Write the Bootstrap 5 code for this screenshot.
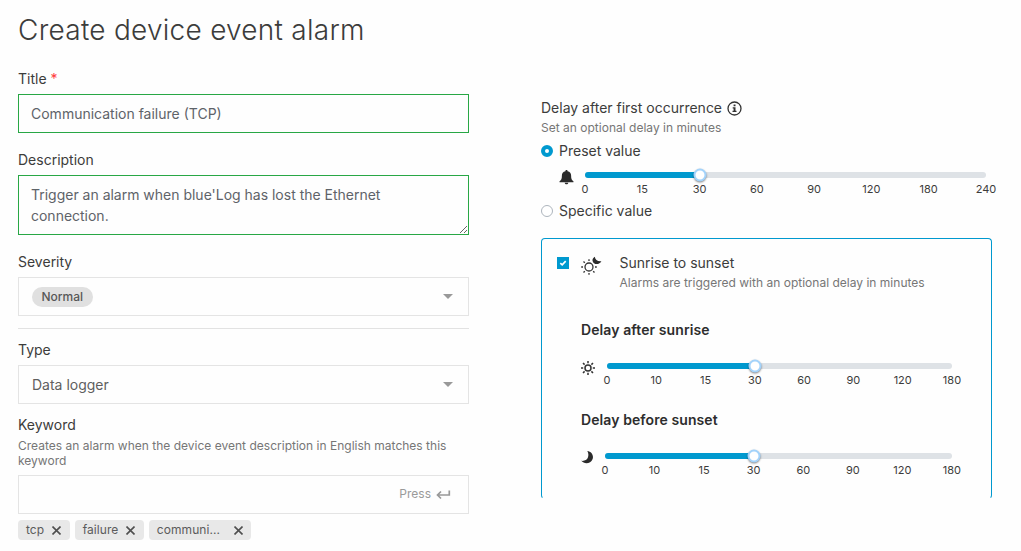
<!DOCTYPE html>
<html lang="en">
<head>
<meta charset="utf-8">
<meta name="viewport" content="width=device-width, initial-scale=1">
<title>Create device event alarm</title>
<link href="https://cdn.jsdelivr.net/npm/bootstrap@5.3.0/dist/css/bootstrap.min.css" rel="stylesheet">
<style>
  body { font-family: Inter, "Liberation Sans", sans-serif; font-size: 14px; line-height: 20px; color: #3c3c3b; background: #fefefe; overflow: hidden; }
  svg { display: block; flex: none; }
  .page { padding: 12px 29px 0 18px; }
  .page-title { font-size: 28px; line-height: 36px; font-weight: 300; letter-spacing: .26px; margin-bottom: 21px; }
  .form-cols { display: grid; grid-template-columns: 451px 451px; column-gap: 72px; }
  .form-label { display: block; margin: 0 0 5px; line-height: 20px; }
  .spaced-label { margin-top: 17px; }
  .keyword-label { margin: 11px 0 3px; }
  .required { color: #ff3b3b; }
  .form-control, .picker { height: 39px; border: 1px solid #e4e4e4; border-radius: 0; background: #fefefe; font-size: 14px; color: #5e6369; padding: 0 12px; }
  .form-control.valid { border-color: #28a745; }
  textarea.form-control { height: 60px; min-height: 60px; padding: 8px 12px; line-height: 21px; letter-spacing: -.01px; overflow: hidden; }
  .picker { padding: 0 15px 0 13px; color: #5f5f5f; }
  .severity { background: #e0e0e0; color: #575757; font-size: 12px; font-weight: 500; line-height: 20px; padding: 0 9.5px; border-radius: 10px; }
  .divider { height: 1px; background: #e2e2e2; margin: 12px 0 11px; }
  .hint { font-size: 12px; line-height: 15px; color: #767676; letter-spacing: .01px; }
  .hint-keyword { margin-bottom: 7px; }
  .hint-under { margin-top: 2px; }
  .press { color: #9a9a9a; font-size: 12px; padding: 0 17px 2px 0; }
  .chips { gap: 5px; margin-top: 6px; }
  .chip { height: 20px; background: #e8e8e8; border-radius: 4px; padding: 0 8.5px 0 8px; font-size: 12px; color: #5b5b5b; letter-spacing: .06px; gap: 8px; }
  .chip-cut { gap: 14px; }
  .right-col { padding-top: 29px; }
  .info-icon { margin-left: 5px; }
  .choice { gap: 6px; }
  .choice-preset { margin-top: 6px; }
  .choice-specific { margin-top: 5px; }
  .radio-dot { width: 12px; height: 12px; border-radius: 50%; border: 1px solid #adb5bd; background: #fff; }
  .radio-dot.on { border: 4px solid #0099cf; }
  .preset-row { padding: 11px 6px 0 17px; }
  .bell { margin: -2px 11px 0 1px; }
  .slider-track { height: 6px; border-radius: 3px; background: #dee2e6; position: relative; }
  .slider-fill { height: 6px; border-radius: 3px; background: #0099cf; }
  .slider-thumb { position: absolute; top: 50%; width: 13px; height: 13px; border-radius: 50%; background: #fff; border: 2px solid #a3d3fb; transform: translate(-50%, -50%); box-shadow: 0 1px 2px rgba(0,0,0,.45); }
  .ticks { font-size: 11px; line-height: 14px; margin-top: 4px; }
  .ticks span { width: 0; display: flex; justify-content: center; }
  .sun-card { height: 261px; margin-top: 17px; border: 1px solid #0099cf; border-bottom-color: transparent; border-radius: 4px; padding: 14px 39px 0 15px; }
  .check-box { width: 12px; height: 12px; margin-top: 4px; background: #0099cf; }
  .sun-moon { margin: 3px 17.500px 0 12px; }
  .sun-body { padding: 30px 0 0 24px; }
  .section-title { font-size: 14px; font-weight: 600; line-height: 20px; letter-spacing: .09px; color: #2d2d2d; margin: 0; }
  .sun-row { padding-top: 23px; margin-bottom: 23px; }
  .row-icon { margin: -2px 12px 0 0; }
</style>
</head>
<body>
<main class="page">
  <h1 class="page-title">Create device event alarm</h1>
  <div class="form-cols">
    <section>
      <label class="form-label">Title <span class="required">*</span></label>
      <input class="form-control valid" type="text" value="Communication failure (TCP)">
      <label class="form-label spaced-label">Description</label>
      <textarea class="form-control valid">Trigger an alarm when blue'Log has lost the Ethernet connection.</textarea>
      <label class="form-label spaced-label">Severity</label>
      <div class="picker d-flex align-items-center justify-content-between">
        <span class="severity">Normal</span>
        <svg width="10" height="5" viewBox="0 0 10 5"><path d="M0 0h10L5 5z" fill="#999"/></svg>
      </div>
      <div class="divider"></div>
      <label class="form-label">Type</label>
      <div class="picker d-flex align-items-center justify-content-between">
        <span>Data logger</span>
        <svg width="10" height="5" viewBox="0 0 10 5"><path d="M0 0h10L5 5z" fill="#999"/></svg>
      </div>
      <label class="form-label keyword-label">Keyword</label>
      <div class="hint hint-keyword">Creates an alarm when the device event description in English matches this keyword</div>
      <div class="picker press d-flex align-items-center justify-content-end">
        <span>Press</span>
        <svg class="ms-1" width="16" height="12" viewBox="0 0 16 12" fill="none" stroke="#999" stroke-width="1.700"><path d="M14.300 2.500V7H3M6 3.500L2.500 7 6 10.500"/></svg>
      </div>
      <div class="chips d-flex">
        <span class="chip d-flex align-items-center"><span>tcp</span><svg width="9" height="9" viewBox="0 0 9 9" stroke="#4f4f4f" stroke-width="1.600"><path d="M.5.5l8 8M8.500.5l-8 8"/></svg></span>
        <span class="chip d-flex align-items-center"><span>failure</span><svg width="9" height="9" viewBox="0 0 9 9" stroke="#4f4f4f" stroke-width="1.600"><path d="M.5.5l8 8M8.500.5l-8 8"/></svg></span>
        <span class="chip chip-cut d-flex align-items-center"><span>communi...</span><svg width="9" height="9" viewBox="0 0 9 9" stroke="#4f4f4f" stroke-width="1.600"><path d="M.5.5l8 8M8.500.5l-8 8"/></svg></span>
      </div>
    </section>

    <section class="right-col">
      <div class="d-flex align-items-center">
        <span>Delay after first occurrence</span>
        <svg class="info-icon" width="15" height="15" viewBox="0 0 15 15"><circle cx="7.500" cy="7.500" r="6.500" fill="none" stroke="#333" stroke-width="1.300"/><path d="M6.600 3.500h1.900v1.700H6.600zM5.700 6.300h2.800v3.500h1V11h-4V9.800h1.100V7.500h-.9z" fill="#333"/></svg>
      </div>
      <div class="hint hint-under">Set an optional delay in minutes</div>
      <div class="choice choice-preset d-flex align-items-center">
        <span class="radio-dot on"></span><span>Preset value</span>
      </div>
      <div class="preset-row d-flex">
        <svg class="bell" width="15" height="15" viewBox="0 0 15 15" fill="#2b2b2b"><path d="M7.500 0c.7 0 1.100.5 1.100 1.200 2.400.5 3.500 2 3.500 4.300 0 3.400.7 4.700 2.200 5.700.5.400.3 1-.3 1H1c-.6 0-.8-.6-.3-1C2.200 10.200 2.900 8.900 2.900 5.500c0-2.300 1.100-3.800 3.500-4.300C6.400.5 6.800 0 7.500 0zM5.700 12.700h3.600c-.2 1-.9 1.500-1.800 1.500s-1.600-.5-1.800-1.500z"/></svg>
        <div class="flex-grow-1">
          <div class="slider-track"><div class="slider-fill" style="width:28.571%"></div><i class="slider-thumb" style="left:28.571%"></i></div>
          <div class="ticks d-flex justify-content-between"><span>0</span><span>15</span><span>30</span><span>60</span><span>90</span><span>120</span><span>180</span><span>240</span></div>
        </div>
      </div>
      <div class="choice choice-specific d-flex align-items-center">
        <span class="radio-dot"></span><span>Specific value</span>
      </div>

      <div class="sun-card">
        <div class="d-flex">
          <span class="check-box"><svg width="12" height="12" viewBox="0 0 12 12" fill="none" stroke="#fff" stroke-width="1.700"><path d="M3.300 6.100l1.900 1.700 3.500-3.600"/></svg></span>
          <svg class="sun-moon" width="21" height="20" viewBox="0 0 21 20"><g fill="none" stroke="#333" stroke-width="1.300"><circle cx="8" cy="11" r="4"/><path d="M8 3.300v1.800M8 17v1.800M.2 11H2M14 11h1.800M2.500 5.500l1.300 1.300M12.200 15.200l1.300 1.300M2.500 16.500l1.300-1.300"/></g><path d="M13.800.800C14 3.700 16.500 5.600 20.400 5.200 19 7.800 15.500 9 13 7.200 10.800 5.400 11 2.300 13.800.800z" fill="#2b2b2b"/></svg>
          <div>
            <div>Sunrise to sunset</div>
            <div class="hint hint-under">Alarms are triggered with an optional delay in minutes</div>
          </div>
        </div>
        <div class="sun-body">
          <h2 class="section-title">Delay after sunrise</h2>
          <div class="sun-row d-flex">
            <svg class="row-icon" width="14" height="14" viewBox="0 0 14 14" fill="none" stroke="#333" stroke-width="1.500"><circle cx="7" cy="7" r="3"/><path d="M7 0v2.200M7 11.800V14M0 7h2.200M11.800 7H14M2 2l1.600 1.600M10.400 10.400L12 12M12 2l-1.600 1.600M3.600 10.400L2 12"/></svg>
            <div class="flex-grow-1">
              <div class="slider-track"><div class="slider-fill" style="width:42.857%"></div><i class="slider-thumb" style="left:42.857%"></i></div>
              <div class="ticks d-flex justify-content-between"><span>0</span><span>10</span><span>15</span><span>30</span><span>60</span><span>90</span><span>120</span><span>180</span></div>
            </div>
          </div>
          <h2 class="section-title">Delay before sunset</h2>
          <div class="sun-row d-flex">
            <svg class="row-icon" width="12" height="13" viewBox="0 0 12 13"><path d="M6.300 0C10.800.400 13 4.800 11.500 8.300 9.800 12.700 3.400 13.700.3 9.800c3 .4 5.700-.6 6.600-3.200.8-2.300.6-4.600-.6-6.600z" fill="#2b2b2b"/></svg>
            <div class="flex-grow-1">
              <div class="slider-track"><div class="slider-fill" style="width:42.857%"></div><i class="slider-thumb" style="left:42.857%"></i></div>
              <div class="ticks d-flex justify-content-between"><span>0</span><span>10</span><span>15</span><span>30</span><span>60</span><span>90</span><span>120</span><span>180</span></div>
            </div>
          </div>
        </div>
      </div>
    </section>
  </div>
</main>
<script src="https://cdn.jsdelivr.net/npm/bootstrap@5.3.0/dist/js/bootstrap.bundle.min.js"></script>
</body>
</html>
